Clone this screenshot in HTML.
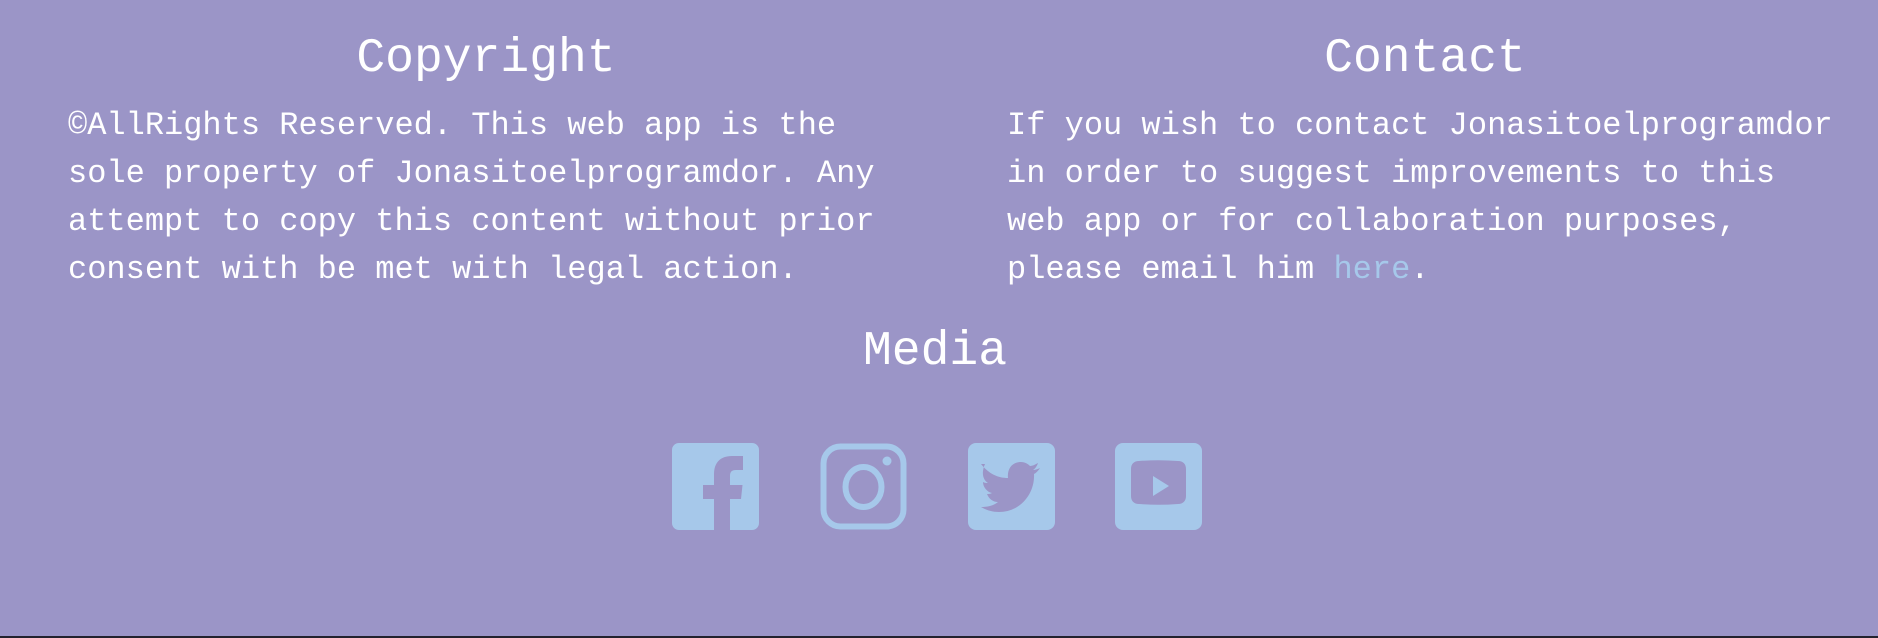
<!DOCTYPE html>
<html><head><meta charset="utf-8"><style>
html,body{margin:0;padding:0}
body{width:1878px;height:638px;background:#9b95c7;position:relative;overflow:hidden;font-family:"Liberation Mono",monospace;color:#fff}
.h{position:absolute;font-size:48px;line-height:48px;white-space:nowrap;transform:translateX(-50%)}
.p{position:absolute;font-size:32px;line-height:48px;white-space:pre}
a{color:#a6c8ea;text-decoration:none}
.ic{position:absolute;top:443px;width:87px;height:87px}
.bar{position:absolute;left:0;bottom:0;width:100%;height:2px;background:#23222e}
</style></head><body>
<div class="h" style="left:486px;top:35px">Copyright</div>
<div class="h" style="left:1425px;top:35px">Contact</div>
<div class="p" style="left:68px;top:102px">©AllRights Reserved. This web app is the
sole property of Jonasitoelprogramdor. Any
attempt to copy this content without prior
consent with be met with legal action.</div>
<div class="p" style="left:1007px;top:102px">If you wish to contact Jonasitoelprogramdor
in order to suggest improvements to this
web app or for collaboration purposes,
please email him <a>here</a>.</div>
<div class="h" style="left:935px;top:328px">Media</div>

<svg class="ic" style="left:672px" viewBox="0 0 87 87"><path fill="#a6c8ea" d="M7 0h73a7 7 0 0 1 7 7v73a7 7 0 0 1-7 7H58V56h11l1.5-14H58v-9c0-4 1.5-6 6-6h7V13h-11C48 13 42 20 42 31v11H31v14h11v31H7a7 7 0 0 1-7-7V7a7 7 0 0 1 7-7z"/></svg>

<svg class="ic" style="left:820px" viewBox="0 0 87 87"><rect x="3.5" y="3.5" width="80" height="80" rx="17" fill="none" stroke="#a6c8ea" stroke-width="6"/><ellipse cx="43.5" cy="44" rx="18" ry="20" fill="none" stroke="#a6c8ea" stroke-width="6"/><circle cx="67" cy="18" r="4.5" fill="#a6c8ea"/></svg>

<svg class="ic" style="left:968px" viewBox="0 0 87 87"><rect width="87" height="87" rx="8" fill="#a6c8ea"/><path fill="#9b95c7" d="M13 21c8 10 17 14 27 14-1-9 4-16 13-16 4 0 7 2 9 4 3 0 6-2 8-3-1 3-3 6-5 7 2 0 5-1 7-2-2 3-4 5-6 6 1 20-14 38-35 38-7 0-13-2-18-5 6 0 12-1 17-5-5 0-9-3-11-8 2 0 3 0 5-1-5-1-9-6-9-11 2 1 3 1 5 1-5-3-7-10-3-19z"/></svg>

<svg class="ic" style="left:1115px" viewBox="0 0 87 87"><rect width="87" height="87" rx="8" fill="#a6c8ea"/><path fill="#9b95c7" d="M16 26c0-5 3-8 8-8 13-1 26-1 39 0 5 0 8 3 8 8v27c0 5-3 8-8 8-13 1-26 1-39 0-5 0-8-3-8-8z"/><path fill="#a6c8ea" d="M38 33l16 10-16 10z"/></svg>

<div class="bar"></div>
</body></html>
